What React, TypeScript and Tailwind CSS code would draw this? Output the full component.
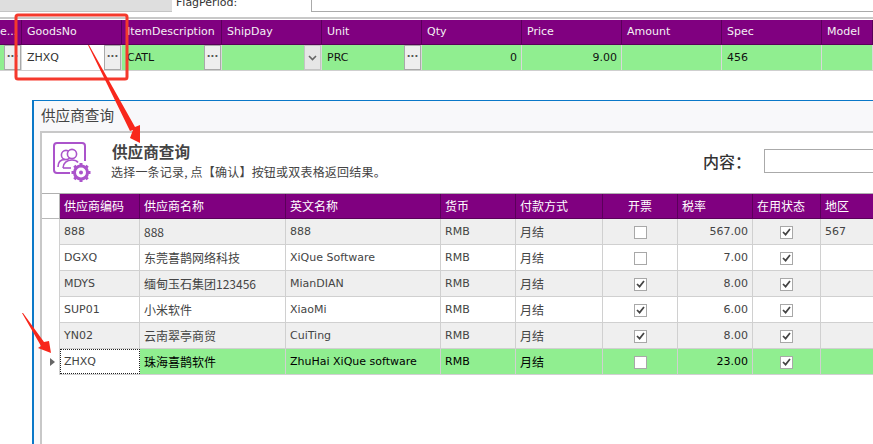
const latin = "font-['DejaVu_Sans','Noto_Sans_CJK_SC',sans-serif]";
const cjk = "font-['Noto_Sans_CJK_SC',sans-serif]";

function Dots() {
  return (
    <span className="absolute right-0 top-0 flex h-[25px] w-[17px] items-center justify-center border border-[#a9a9a9] bg-[#eeeeee] pb-[2px] text-[10px] font-bold leading-none text-[#555555]">
      ···
    </span>
  );
}

const topCols = [
  { t: "e...", w: "w-[22px]", v: "", btn: true },
  { t: "GoodsNo", w: "w-[100px]", v: "ZHXQ", btn: true, white: true },
  { t: "ItemDescription", w: "w-[100px]", v: "CATL", btn: true },
  { t: "ShipDay", w: "w-[100px]", v: "", combo: true },
  { t: "Unit", w: "w-[100px]", v: "PRC", btn: true },
  { t: "Qty", w: "w-[100px]", v: "0", right: true },
  { t: "Price", w: "w-[100px]", v: "9.00", right: true },
  { t: "Amount", w: "w-[100px]", v: "" },
  { t: "Spec", w: "w-[100px]", v: "456" },
  { t: "Model", w: "w-[51px]", v: "" },
];

function TopGrid() {
  return (
    <div className={`w-[873px] overflow-hidden text-[11px] ${latin}`}>
      <div className="flex h-[25px] border-b border-[#5a005a] bg-[#800080] text-[#f4f0f4]">
        {topCols.map((c, i) => (
          <div key={c.t} className={`${c.w} flex shrink-0 items-center overflow-hidden whitespace-nowrap border-r border-[#5a005a] pt-px ${i === 0 ? "pl-0" : "pl-[5px]"}`}>
            {c.t}
          </div>
        ))}
      </div>
      <div className="flex h-[26px] border-b border-[#cfcfcf] bg-[#90ee90] text-[#111111]">
        {topCols.map((c) => (
          <div key={c.t} className={`${c.w} relative flex shrink-0 items-center border-r border-[#d8d8d8] pt-px ${c.right ? "justify-end pr-[4px]" : "pl-[5px]"} ${c.white ? "bg-white text-[#333333]" : ""}`}>
            {c.v}
            {c.btn && <Dots />}
            {c.combo && (
              <span className="absolute right-0 top-0 flex h-[25px] w-[17px] items-center justify-center border border-[#c4c4c4] bg-[#e6e6e6]">
                <svg width="9" height="6" viewBox="0 0 9 6"><path d="M1 1l3.500 3.500L8 1" fill="none" stroke="#666666" strokeWidth="1.600" /></svg>
              </span>
            )}
          </div>
        ))}
      </div>
    </div>
  );
}

const colW = ["w-[80px]", "w-[146px]", "w-[155px]", "w-[75px]", "w-[87px]", "w-[75px]", "w-[75px]", "w-[68px]", "w-[60px]"];
const heads = ["供应商编码", "供应商名称", "英文名称", "货币", "付款方式", "开票", "税率", "在用状态", "地区"];
const rows = [
  ["888", "888", "888", "RMB", "月结", false, "567.00", true, "567"],
  ["DGXQ", "东莞喜鹊网络科技", "XiQue Software", "RMB", "月结", false, "7.00", true, ""],
  ["MDYS", "缅甸玉石集团123456", "MianDIAN", "RMB", "月结", true, "8.00", true, ""],
  ["SUP01", "小米软件", "XiaoMi", "RMB", "月结", true, "6.00", true, ""],
  ["YN02", "云南翠亭商贸", "CuiTing", "RMB", "月结", true, "8.00", true, ""],
  ["ZHXQ", "珠海喜鹊软件", "ZhuHai XiQue software", "RMB", "月结", false, "23.00", true, ""],
] as const;

function Check({ on }: { on: boolean }) {
  return (
    <span className="flex h-[13px] w-[13px] items-center justify-center border border-[#a8a8a8] bg-white">
      {on && (
        <svg width="9" height="8" viewBox="0 0 9 8"><path d="M1 4l2.600 2.600L8 1" fill="none" stroke="#444444" strokeWidth="1.700" /></svg>
      )}
    </span>
  );
}

function Logo() {
  return (
    <svg width="40" height="42" viewBox="0 0 40 42" className="shrink-0">
      <path d="M18 31H5a3 3 0 0 1-3-3V4a3 3 0 0 1 3-3h25a3 3 0 0 1 3 3v15" fill="none" stroke="#ab54cb" strokeWidth="2" />
      <circle cx="14" cy="13" r="4.600" fill="none" stroke="#ab54cb" strokeWidth="1.600" />
      <circle cx="20" cy="12" r="4.600" fill="#ffffff" stroke="#ab54cb" strokeWidth="1.600" />
      <path d="M6 25c0-5 3-7.500 7-7.500M11 26c0-5 4-8 9-8 3 0 5 1 6 2.500" fill="none" stroke="#ab54cb" strokeWidth="1.600" />
      <path d="M11 26h8" fill="none" stroke="#ab54cb" strokeWidth="1.600" />
      <circle cx="29" cy="30.500" r="6.500" fill="none" stroke="#ab54cb" strokeWidth="3" />
      <circle cx="29" cy="30.500" r="2" fill="#ab54cb" />
      <path d="M29 21v3M29 37v3M19.500 30.500h3M35.500 30.500h3M22.300 23.800l2.100 2.100M33.600 35.100l2.100 2.100M22.300 37.200l2.100-2.100M33.600 25.900l2.100-2.100" fill="none" stroke="#ab54cb" strokeWidth="3" />
    </svg>
  );
}

function SupplierWindow() {
  return (
    <div className="ml-[32px] mt-[29px] h-[400px] border-l-2 border-t border-[#0a78c8] bg-[#f8f8fa] pl-[6px]">
      <div className={`flex h-[30px] items-center pb-[2px] pl-px text-[14.6px] text-[#444444] ${cjk}`}>供应商查询</div>
      <div className="h-[370px] border-l-2 border-t-2 border-[#c8c8c8] bg-white">
        <div className="flex h-[60px]">
          <div className="flex w-[661px] shrink-0">
            <div className="flex pl-[10px] pt-[9px]"><Logo /></div>
            <div className="pl-[20px] pt-[7px]">
              <div className={`whitespace-nowrap text-[15.6px] font-bold leading-[22px] text-[#444444] ${cjk}`}>供应商查询</div>
              <div className={`-ml-px mt-px whitespace-nowrap text-[12px] leading-[18px] tracking-[0.2px] text-[#444444] ${cjk}`}>选择一条记录, 点【确认】按钮或双表格返回结果。</div>
            </div>
          </div>
          <div className={`flex items-center whitespace-nowrap pb-[4px] text-[16px] font-medium text-[#333333] ${cjk}`}>
            内容：
            <span className="ml-[13px] h-[24px] w-[120px] shrink-0 border border-[#aaaaaa] bg-white" />
          </div>
        </div>
        <div className={`overflow-hidden border-t border-[#b0b0b0] text-[11px] ${latin}`}>
          <div className="flex h-[25px]">
            <div className="w-[18px] shrink-0 border-b border-r border-[#b8b8b8] bg-white" />
            <div className={`flex border-b border-[#5a005a] bg-[#800080] text-[12px] text-white ${cjk}`}>
              {heads.map((h, i) => (
                <div key={h} className={`${colW[i]} flex shrink-0 items-center border-r border-[#5a005a] ${i === 5 ? "justify-center" : "pl-[4px]"}`}>
                  {h}
                </div>
              ))}
            </div>
          </div>
          {rows.map((r, ri) => {
            const sel = ri === 5;
            const bg = sel ? "bg-[#90ee90] text-black" : ri % 2 === 0 ? "bg-[#efefef] text-[#444444]" : "bg-white text-[#444444]";
            return (
              <div key={ri} className="flex h-[26px]">
                <div className="flex w-[17px] shrink-0 items-center justify-end pr-[4px]">
                  {sel && <span className="h-0 w-0 border-y-[4px] border-l-[5px] border-y-transparent border-l-[#666666]" />}
                </div>
                <div className={`flex border-b border-l border-[#d0d0d0] ${bg}`}>
                  {r.map((v, i) => {
                    const focus = sel && i === 0;
                    const zh = i === 1 || i === 4;
                    return (
                      <div
                        key={i}
                        className={`${colW[i]} flex shrink-0 items-center whitespace-nowrap ${zh ? `text-[12px] ${cjk}` : "pt-px"} ${focus ? "border border-dotted border-[#222222] bg-white pl-[3px] text-[#444444]" : "border-r border-[#d0d0d0]"} ${i === 5 || i === 7 ? "justify-center" : i === 6 ? "justify-end pr-[4px]" : focus ? "" : "pl-[4px]"}`}
                      >
                        {typeof v === "boolean" ? <Check on={v} /> : v}
                      </div>
                    );
                  })}
                </div>
              </div>
            );
          })}
        </div>
      </div>
    </div>
  );
}

function Annotations() {
  return (
    <svg className="pointer-events-none absolute left-0 top-0" width="873" height="444" viewBox="0 0 873 444">
      <rect x="16" y="15" width="111" height="64" rx="2" fill="none" stroke="#f5392c" strokeWidth="3" />
      <polygon points="88,45 89,45 135,127 140,125 140,143 130,138 133,130 130,131" fill="#f8271c" />
      <polygon points="22,313 23,313 44,342 49,341 51,353 38,348 41,346" fill="#f8271c" />
    </svg>
  );
}

export default function App() {
  return (
    <div className={`relative h-[444px] w-[873px] overflow-hidden bg-white ${latin}`}>
      <div className="flex h-[16px] items-start">
        <div className="h-[12px] w-[172px] border-b border-[#c4c4c4] bg-[#dedede]" />
        <div className="-mt-[4px] w-[139px] pl-[4px] text-[11px] leading-[14px] text-[#333333]">FlagPeriod:</div>
        <div className="h-[12px] flex-1 border-b border-l border-[#aaaaaa] bg-white" />
      </div>
      <div className="mb-[1px] h-[3px] border-b-2 border-[#c8c8c8]" />
      <TopGrid />
      <SupplierWindow />
      <Annotations />
    </div>
  );
}
